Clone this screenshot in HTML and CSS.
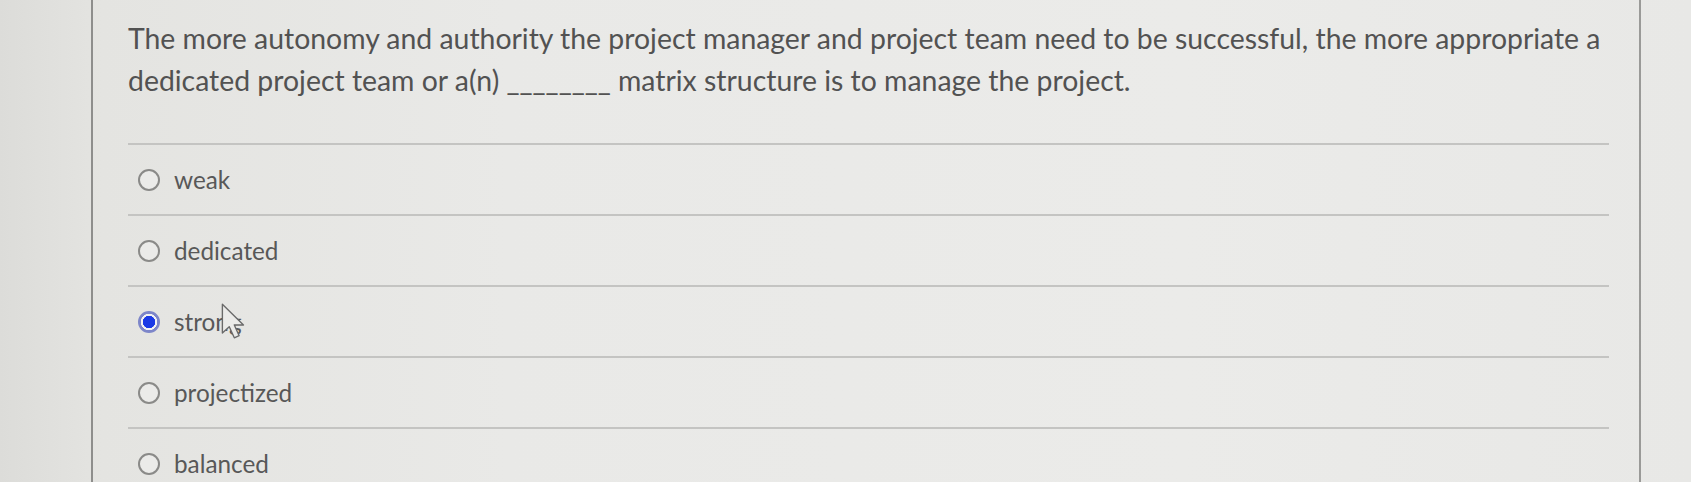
FILE: index.html
```html
<!DOCTYPE html>
<html lang="en">
<head>
    <meta charset="UTF-8">
    <meta name="viewport" content="width=device-width, initial-scale=1.0">
    <title>Question</title>
    <link rel="stylesheet" href="styles.css">
</head>
<body>

<div class="screen">
    <div class="gutter"></div>

    <div class="panel">
        <p class="question">The more autonomy and authority the project manager and project team need to be successful, the more appropriate a dedicated project team or a(n) ________ matrix structure is to manage the project.</p>

        <div class="options">
            <label class="option">
                <input type="radio" name="answer">
                <span>weak</span>
            </label>
            <label class="option">
                <input type="radio" name="answer">
                <span>dedicated</span>
            </label>
            <label class="option">
                <input type="radio" name="answer" checked>
                <span class="picked">strong
                    <svg class="cursor" width="30" height="39" viewBox="0 0 13 17">
                        <path d="M1 1 L1 13.5 L4 10.8 L6.2 15.6 L8.3 14.7 L6.2 10 L10.2 10 Z" fill="#ebebe9" stroke="#6a6a6a" stroke-width="0.6" stroke-linejoin="round"/>
                    </svg>
                </span>
            </label>
            <label class="option">
                <input type="radio" name="answer">
                <span>projectized</span>
            </label>
            <label class="option">
                <input type="radio" name="answer">
                <span>balanced</span>
            </label>
        </div>
    </div>

    <div class="edge"></div>
</div>

</body>
</html>
```

FILE: styles.css
```css
body {
    margin: 0;
    height: 482px;
    overflow: hidden;
    font-family: "Lato", "Liberation Sans", sans-serif;
    background: linear-gradient(
        90deg,
        #dcdcd9 0,
        #e4e4e1 6%,
        #e9e9e7 30%,
        #ebebe9 70%,
        #e8e8e6 100%
    );
}

.screen {
    display: flex;
    height: 482px;
}

.gutter {
    width: 91px;
    border-right: 2px solid #8e8e8c;
}

.panel {
    flex: 1;
    padding: 0 30px 0 35px;
}

.edge {
    width: 50px;
    border-left: 2px solid #9a9a98;
}

.question {
    margin: 0;
    padding-top: 17px;
    font-size: 28.4px;
    line-height: 42px;
    color: #525252;
}

.options {
    margin-top: 42px;
    border-top: 2px solid #c4c4c2;
}

.option {
    display: flex;
    align-items: center;
    height: 69px;
    padding-left: 10px;
    border-bottom: 2px solid #c4c4c2;
    font-size: 24.3px;
    color: #585858;
}

.option input {
    appearance: none;
    width: 22px;
    height: 22px;
    margin: 0 14px 0 0;
    border: 2px solid #8a8a88;
    border-radius: 50%;
    background: #ebebe9;
}

.option input:checked {
    border-color: #7d86c9;
    background: radial-gradient(circle, #1b3ae6 0 6px, #f2f2f2 6.5px 8px, #7d86c9 8.5px);
}

.picked {
    position: relative;
}

.cursor {
    position: absolute;
    left: 46px;
    top: -5px;
}
```
